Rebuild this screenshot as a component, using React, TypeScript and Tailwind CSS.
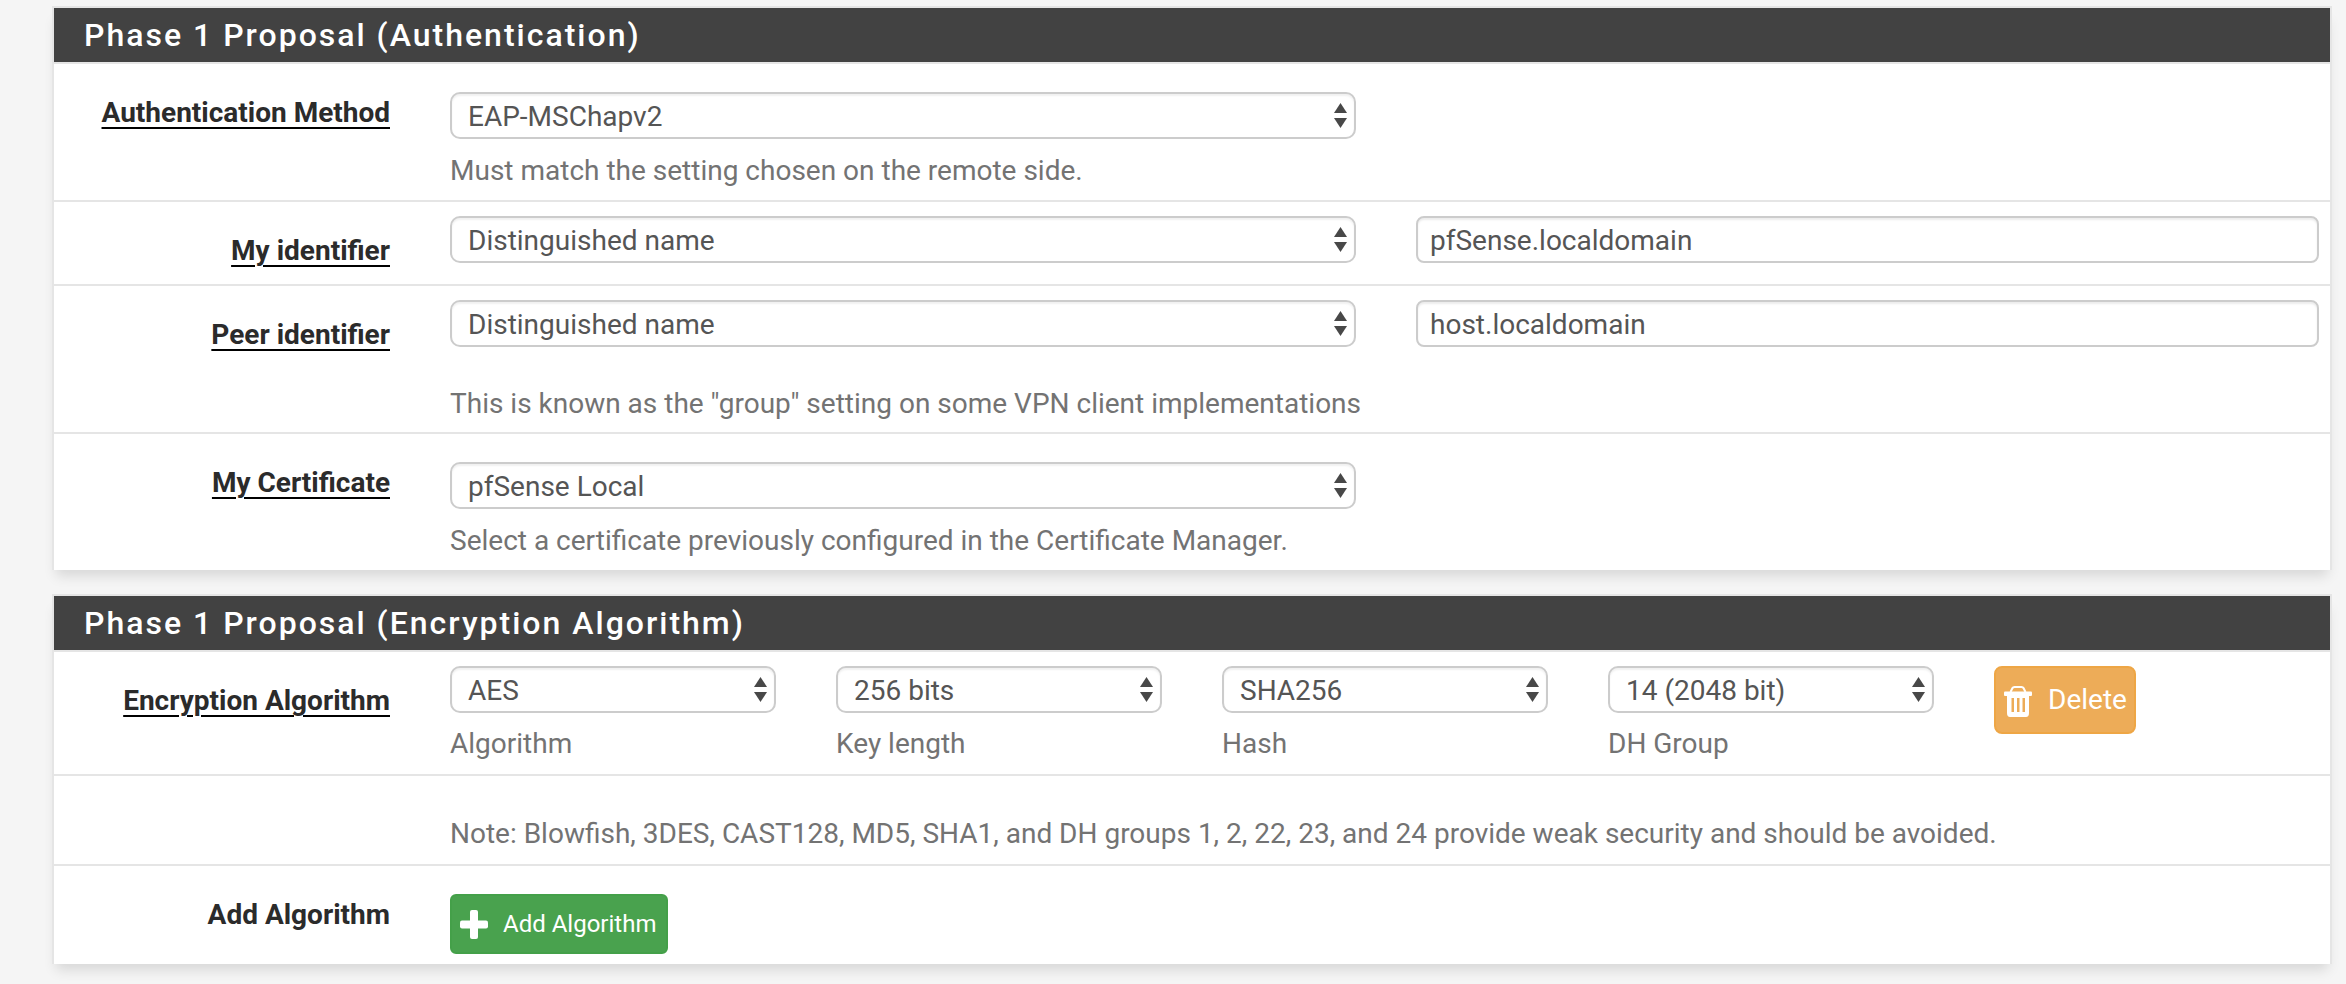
import type { ReactNode } from 'react';

const Arrows = () => (
  <svg width="13" height="25" viewBox="0 0 13 25" className="shrink-0">
    <path d="M6.5 0 L13 10 L0 10 Z" fill="#484848" />
    <path d="M6.5 25 L13 15 L0 15 Z" fill="#484848" />
  </svg>
);

const TrashIcon = () => (
  <svg width="28" height="31" viewBox="0 0 28 31" className="mt-[3px] shrink-0" fill="white">
    <path d="M6.5 6 L8.5 2 Q9 1 10.5 1 H17.5 Q19 1 19.5 2 L21.5 6" fill="none" stroke="white" strokeWidth="2" />
    <rect x="0" y="5.5" width="28" height="4.5" rx="1" />
    <path
      fillRule="evenodd"
      d="M3 9 H25 V27 Q25 31 22 31 H6 Q3 31 3 27 Z M7.5 12 V26 H10 V12 Z M13 12 V26 H15.5 V12 Z M18.5 12 V26 H21 V12 Z"
    />
  </svg>
);

const PlusIcon = () => (
  <svg width="28" height="29" viewBox="0 0 28 29" className="shrink-0" fill="white">
    <rect x="10" y="0" width="8" height="29" rx="2" />
    <rect x="0" y="10.5" width="28" height="8" rx="2" />
  </svg>
);

function Select({ value, className }: { value: string; className: string }) {
  return (
    <div className={`flex h-[47px] items-center justify-between rounded-[10px] border-2 border-[#cccccc] bg-white pl-[16px] pr-[7px] text-[#555555] shadow-[inset_0_2px_2px_rgba(0,0,0,0.06)] ${className}`}>
      <span className="pt-[3px]">{value}</span>
      <Arrows />
    </div>
  );
}

function TextInput({ value }: { value: string }) {
  return (
    <div className="flex h-[47px] w-[903px] items-center rounded-[8px] border-2 border-[#cccccc] bg-white pl-[12px] pt-[2px] text-[#555555] shadow-[inset_0_2px_2px_rgba(0,0,0,0.08)]">
      {value}
    </div>
  );
}

function Row({ label, underline = true, labelTop, className, children }: {
  label?: string;
  underline?: boolean;
  labelTop: string;
  className: string;
  children: ReactNode;
}) {
  return (
    <div className={`flex border-[#e5e5e5] ${className}`}>
      <div className={`w-[336px] shrink-0 text-right font-bold text-[#2b2b2b] ${labelTop}`}>
        {label && <span className={underline ? 'underline decoration-black decoration-2 underline-offset-[5px]' : ''}>{label}</span>}
      </div>
      <div className="ml-[60px] min-w-0 flex-1">{children}</div>
    </div>
  );
}

function Panel({ title, children }: { title: string; children: ReactNode }) {
  return (
    <section className="w-[2280px] border-x-2 border-t-2 border-[#e5e5e5] bg-white shadow-[0_10px_12px_-4px_rgba(0,0,0,0.12)]">
      <h2 className="flex h-[56px] items-center border-b-2 border-[#e5e5e5] bg-[#424242] bg-clip-padding pl-[30px] text-[32px] font-medium tracking-[2px] text-white">{title}</h2>
      {children}
    </section>
  );
}

const Help = ({ children, className = '' }: { children: ReactNode; className?: string }) => (
  <p className={`text-[#737373] ${className}`}>{children}</p>
);

const algorithmColumns = [
  { value: 'AES', help: 'Algorithm' },
  { value: '256 bits', help: 'Key length' },
  { value: 'SHA256', help: 'Hash' },
  { value: '14 (2048 bit)', help: 'DH Group' },
];

export default function App() {
  return (
    <div className="min-h-[984px] overflow-hidden bg-[#f5f5f5] pl-[52px] pt-[6px] font-['Roboto',sans-serif] text-[28px] leading-[36px]">
      <Panel title="Phase 1 Proposal (Authentication)">
        <Row label="Authentication Method" labelTop="pt-[31px]" className="h-[138px] border-b-2">
          <div className="pt-[28px]">
            <Select value="EAP-MSChapv2" className="w-[906px]" />
            <Help className="mt-[14px]">Must match the setting chosen on the remote side.</Help>
          </div>
        </Row>
        <Row label="My identifier" labelTop="pt-[31px]" className="h-[84px] border-b-2">
          <div className="flex gap-[60px] pt-[14px]">
            <Select value="Distinguished name" className="w-[906px]" />
            <TextInput value="pfSense.localdomain" />
          </div>
        </Row>
        <Row label="Peer identifier" labelTop="pt-[31px]" className="h-[148px] border-b-2">
          <div className="pt-[14px]">
            <div className="flex gap-[60px]">
              <Select value="Distinguished name" className="w-[906px]" />
              <TextInput value="host.localdomain" />
            </div>
            <Help className="mt-[39px]">This is known as the "group" setting on some VPN client implementations</Help>
          </div>
        </Row>
        <Row label="My Certificate" labelTop="pt-[31px]" className="h-[136px]">
          <div className="pt-[28px]">
            <Select value="pfSense Local" className="w-[906px]" />
            <Help className="mt-[14px]">Select a certificate previously configured in the Certificate Manager.</Help>
          </div>
        </Row>
      </Panel>

      <div className="mt-[24px]">
        <Panel title="Phase 1 Proposal (Encryption Algorithm)">
          <Row label="Encryption Algorithm" labelTop="pt-[31px]" className="h-[124px] border-b-2">
            <div className="flex pt-[14px]">
              {algorithmColumns.map(col => (
                <div key={col.help} className="mr-[61px] w-[325px]">
                  <Select value={col.value} className="w-[326px]" />
                  <Help className="mt-[13px]">{col.help}</Help>
                </div>
              ))}
              <button className="flex h-[68px] w-[142px] items-center gap-[16px] rounded-[8px] border-2 border-[#eea645] bg-[#edac58] pl-[8px] text-[28px] text-white">
                <TrashIcon />
                Delete
              </button>
            </div>
          </Row>
          <Row labelTop="pt-0" className="h-[90px] border-b-2">
            <Help className="pt-[40px]">Note: Blowfish, 3DES, CAST128, MD5, SHA1, and DH groups 1, 2, 22, 23, and 24 provide weak security and should be avoided.</Help>
          </Row>
          <Row label="Add Algorithm" underline={false} labelTop="pt-[31px]" className="h-[98px]">
            <div className="pt-[28px]">
              <button className="flex h-[60px] w-[218px] items-center gap-[15px] rounded-[6px] border-2 border-[#44a049] bg-[#49a24e] pl-[8px] text-[24px] text-white">
                <PlusIcon />
                Add Algorithm
              </button>
            </div>
          </Row>
        </Panel>
      </div>
    </div>
  );
}
